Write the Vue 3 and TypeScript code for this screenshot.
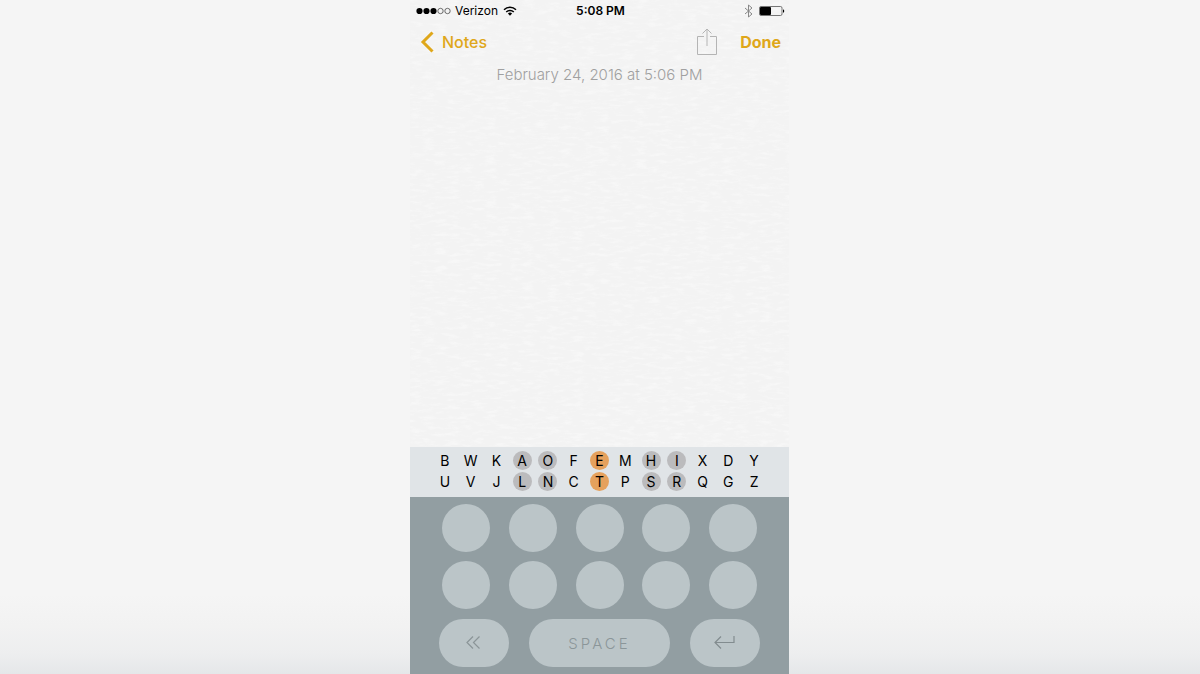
<script setup lang="ts">
import { ref } from 'vue'

type Tone = 'plain' | 'grey' | 'orange'
interface Pair { top: string; bottom: string; tone: Tone }

const tones: Record<string, Tone> = { A: 'grey', O: 'grey', E: 'orange', H: 'grey', I: 'grey' }
const upper = 'BWKAOFEMHIXDY'
const lower = 'UVJLNCTPSRQGZ'
const pairs: Pair[] = upper.split('').map((top, i) => ({
  top,
  bottom: lower[i],
  tone: tones[top] ?? 'plain',
}))

const keyRows = [[1, 2, 3, 4, 5], [6, 7, 8, 9, 10]]
const note = ref('')
</script>

<template>
  <div class="stage">
    <main class="phone">
      <section class="paper">
        <svg class="grain" aria-hidden="true">
          <filter id="paper-grain">
            <feTurbulence type="fractalNoise" baseFrequency="0.08 0.3" numOctaves="3" seed="4" />
            <feColorMatrix type="matrix" values="0 0 0 0 1  0 0 0 0 1  0 0 0 0 1  3 0 0 0 -1.4" />
          </filter>
          <rect width="100%" height="100%" filter="url(#paper-grain)" />
        </svg>

        <header class="status">
          <div class="carrier">
            <svg width="36" height="8" viewBox="0 0 36 8" aria-hidden="true">
              <circle cx="3.5" cy="4" r="3.1" />
              <circle cx="10.5" cy="4" r="3.1" />
              <circle cx="17.5" cy="4" r="3.1" />
              <g fill="none" stroke="#333" stroke-width=".7">
                <circle cx="24.5" cy="4" r="2.7" />
                <circle cx="31.5" cy="4" r="2.7" />
              </g>
            </svg>
            <span>Verizon</span>
            <svg class="wifi" width="14" height="10" viewBox="0 0 14 10" aria-hidden="true">
              <g fill="none" stroke="#000" stroke-width="1.5">
                <path d="M1 3.7a8.6 8.6 0 0 1 12 0" />
                <path d="M3.2 6a5.4 5.4 0 0 1 7.6 0" />
              </g>
              <path d="M4.9 7.6a3 3 0 0 1 4.2 0L7 9.8z" />
            </svg>
          </div>
          <time class="clock">5:08 PM</time>
          <div class="power">
            <svg width="9" height="14" viewBox="0 0 9 14" fill="none" stroke="#888" stroke-width="1" aria-hidden="true">
              <path d="M1 4l7 6-3.5 3V1L8 4l-7 6" />
            </svg>
            <svg width="26" height="10" viewBox="0 0 26 10" aria-hidden="true">
              <rect x=".5" y=".5" width="22.5" height="9" rx="1.5" fill="none" stroke="#555" stroke-width=".8" />
              <rect x="1" y="1" width="11" height="8" rx="1" />
              <path d="M24 3.2c1.7.4 1.7 3.2 0 3.6z" />
            </svg>
          </div>
        </header>

        <nav class="bar">
          <a class="back" href="#notes">
            <svg width="14" height="22" viewBox="0 0 14 22" fill="none" stroke="currentColor" stroke-width="3" aria-hidden="true">
              <path d="M12.5 1.5L3 11l9.5 9.5" />
            </svg>
            <span>Notes</span>
          </a>
          <button class="share" type="button" aria-label="Share">
            <svg width="20" height="28" viewBox="0 0 20 28" fill="none" stroke="#b4b4b4" stroke-width="1" aria-hidden="true">
              <path d="M7 8.5H.5v18h19v-18H13M10 18V1M5.5 5.5L10 1l4.5 4.5" />
            </svg>
          </button>
          <button class="done" type="button">Done</button>
        </nav>

        <p class="date">February 24, 2016 at 5:06 PM</p>
        <textarea v-model="note" class="note" aria-label="Note"></textarea>
      </section>

      <section class="letters" aria-label="Letters">
        <div v-for="pair in pairs" :key="pair.top" class="pair" :class="pair.tone">
          <span>{{ pair.top }}</span>
          <span>{{ pair.bottom }}</span>
        </div>
      </section>

      <section class="keyboard" aria-label="Keyboard">
        <div v-for="(row, r) in keyRows" :key="r" class="dots">
          <button v-for="k in row" :key="k" class="dot" type="button" :aria-label="`Key ${k}`"></button>
        </div>
        <div class="actions">
          <button class="pill" type="button" aria-label="Delete">
            <svg width="16" height="14" viewBox="0 0 16 14" fill="none" stroke="#8b9598" stroke-width="1.2" aria-hidden="true">
              <path d="M7 .5l-6 6 6 6M13.5 .5l-6 6 6 6" />
            </svg>
          </button>
          <button class="pill space" type="button">SPACE</button>
          <button class="pill" type="button" aria-label="Return">
            <svg width="22" height="14" viewBox="0 0 22 14" fill="none" stroke="#828c8f" stroke-width="1.2" aria-hidden="true">
              <path d="M20 0v6.5H1M7 .5l-6 6 6 6" />
            </svg>
          </button>
        </div>
      </section>
    </main>
  </div>
</template>

<style>
body {
  margin: 0;
  background: #f5f5f5;
}
</style>

<style scoped>
.stage {
  display: grid;
  grid-template-columns: 410fr 379fr 411fr;
  min-height: 100vh;
  background: linear-gradient(to top, #e5e7e9 0, #edeeef 20px, #f2f2f2 48px, #f5f5f5 80px);
  font-family: Inter, "Liberation Sans", sans-serif;
  color: #000;
}
button {
  border: 0;
  padding: 0;
  background: none;
  font: inherit;
  color: inherit;
}
svg {
  display: block;
}
.phone {
  grid-column: 2;
  display: flex;
  flex-direction: column;
}
.paper {
  position: relative;
  flex: 1;
  display: flex;
  flex-direction: column;
  background: #f3f3f3;
}
.paper > * {
  position: relative;
}
.paper > .grain {
  position: absolute;
  inset: 0;
  width: 100%;
  height: 100%;
  opacity: 0.35;
}
.status {
  display: grid;
  grid-template-columns: 1fr auto 1fr;
  align-items: center;
  height: 21px;
  padding: 0 4px 0 6px;
  font-size: 12px;
}
.carrier {
  display: flex;
  align-items: center;
  gap: 3px;
}
.wifi {
  margin-left: 2px;
}
.clock {
  font-weight: 600;
}
.power {
  display: flex;
  align-items: center;
  justify-content: flex-end;
  gap: 6px;
}
.bar {
  display: flex;
  align-items: center;
  height: 42px;
  padding: 0 8px 0 10px;
  color: #dfa71a;
  font-size: 16px;
}
.back {
  display: flex;
  align-items: center;
  gap: 8px;
  margin-right: auto;
  color: inherit;
  font-weight: 500;
  text-decoration: none;
}
.share {
  margin-right: 23px;
}
.done {
  font-weight: 700;
}
.date {
  margin: 0;
  font-size: 15px;
  font-weight: 300;
  line-height: 24px;
  text-align: center;
  color: #a0a0a0;
}
.note {
  flex: 1;
  min-height: 80px;
  padding: 12px 16px;
  border: 0;
  background: transparent;
  font: inherit;
  resize: none;
  outline: none;
}
.letters {
  display: grid;
  grid-template-columns: repeat(13, 1fr);
  padding: 4px 22px 6px;
  background: #e0e4e7;
  font-size: 14px;
}
.pair {
  display: grid;
  justify-items: center;
  gap: 2px;
}
.pair span {
  width: 19px;
  height: 19px;
  border-radius: 50%;
  line-height: 19px;
  text-align: center;
}
.grey span {
  background: #bbbbbd;
}
.orange span {
  background: #e5a15d;
}
.keyboard {
  display: grid;
  gap: 9px;
  padding: 7px 29px;
  background: #929ea2;
}
.dots {
  display: flex;
  justify-content: space-between;
  padding: 0 3px;
}
.dot,
.pill {
  height: 48px;
  border-radius: 24px;
  background: #bbc5c8;
}
.dot {
  width: 48px;
}
.actions {
  display: flex;
  gap: 20px;
  padding-top: 1px;
}
.pill {
  display: flex;
  align-items: center;
  justify-content: center;
  width: 70px;
}
.space {
  flex: 1;
  color: #8b9699;
  font-size: 15px;
  font-weight: 300;
  letter-spacing: 3px;
}
</style>
